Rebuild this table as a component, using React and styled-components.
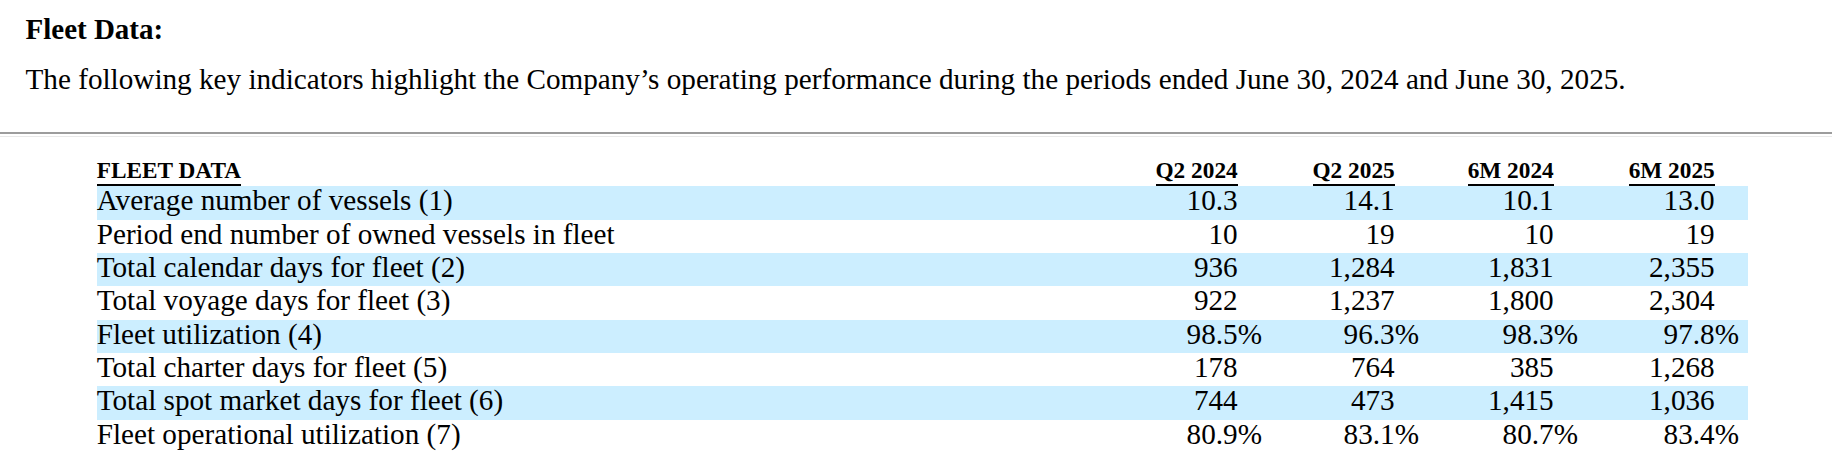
import React from 'react';
import styled, { createGlobalStyle } from 'styled-components';

const GlobalStyle = createGlobalStyle`
  html, body {
    margin: 0;
    padding: 0;
    background: #fff;
  }
  body {
    font-family: "Liberation Serif", "Times New Roman", serif;
    color: #000;
  }
`;

const Page = styled.div`
  padding-top: 11.5px;
`;

const Intro = styled.div`
  padding-left: 25.5px;
`;

const Heading = styled.h2`
  margin: 0;
  font-size: 29px;
  line-height: 34px;
  font-weight: bold;
`;

const Lead = styled.p`
  margin: 16.7px 0 0;
  font-size: 29.2px;
  line-height: 34px;
`;

const Rule = styled.hr`
  margin: 35.5px 0 0;
  height: 2px;
  border: none;
  border-top: 2px solid #9c9c9c;
  border-bottom: 1px solid #e9e9e9;
`;

const Table = styled.table`
  margin: 20.6px 0 0 96.7px;
  width: 1651px;
  table-layout: fixed;
  border-collapse: collapse;
  border-spacing: 0;
`;

const HeadCell = styled.th`
  padding: 0;
  vertical-align: bottom;
  text-align: ${(p) => (p.$left ? 'left' : 'right')};
  font-size: 23.3px;
  font-weight: bold;
  white-space: nowrap;
`;

const HeadLabel = styled.span`
  display: inline-block;
  line-height: 23px;
  padding-bottom: 2px;
  border-bottom: 2px solid #000;
`;

const Row = styled.tr`
  background: ${(p) => (p.$shaded ? '#cceeff' : 'transparent')};
`;

const Cell = styled.td`
  padding: 0;
  height: 33.33px;
  box-sizing: border-box;
  vertical-align: top;
  font-size: 29.2px;
  line-height: 28px;
  white-space: nowrap;
  text-align: ${(p) => (p.$right ? 'right' : 'left')};
`;

const periods = ['Q2 2024', 'Q2 2025', '6M 2024', '6M 2025'];
const valueWidths = [130, 124, 126, 128];

const rows = [
  { label: 'Average number of vessels (1)', values: ['10.3', '14.1', '10.1', '13.0'] },
  { label: 'Period end number of owned vessels in fleet', values: ['10', '19', '10', '19'] },
  { label: 'Total calendar days for fleet (2)', values: ['936', '1,284', '1,831', '2,355'] },
  { label: 'Total voyage days for fleet (3)', values: ['922', '1,237', '1,800', '2,304'] },
  { label: 'Fleet utilization (4)', values: ['98.5', '96.3', '98.3', '97.8'], pct: true },
  { label: 'Total charter days for fleet (5)', values: ['178', '764', '385', '1,268'] },
  { label: 'Total spot market days for fleet (6)', values: ['744', '473', '1,415', '1,036'] },
  { label: 'Fleet operational utilization (7)', values: ['80.9', '83.1', '80.7', '83.4'], pct: true },
];

export default function App() {
  return (
    <Page>
      <GlobalStyle />
      <Intro>
        <Heading>Fleet Data:</Heading>
        <Lead>
          The following key indicators highlight the Company’s operating performance during the
          periods ended June 30, 2024 and June 30, 2025.
        </Lead>
      </Intro>
      <Rule />
      <Table>
        <colgroup>
          <col />
          {valueWidths.map((w, i) => (
            <React.Fragment key={i}>
              <col style={{ width: w }} />
              <col style={{ width: 33 }} />
            </React.Fragment>
          ))}
        </colgroup>
        <thead>
          <tr>
            <HeadCell $left>
              <HeadLabel>FLEET DATA</HeadLabel>
            </HeadCell>
            {periods.map((p) => (
              <React.Fragment key={p}>
                <HeadCell>
                  <HeadLabel>{p}</HeadLabel>
                </HeadCell>
                <HeadCell />
              </React.Fragment>
            ))}
          </tr>
        </thead>
        <tbody>
          {rows.map((r, i) => (
            <Row key={r.label} $shaded={i % 2 === 0}>
              <Cell>{r.label}</Cell>
              {r.values.map((v, j) => (
                <React.Fragment key={j}>
                  <Cell $right>{v}</Cell>
                  <Cell>{r.pct ? '%' : ''}</Cell>
                </React.Fragment>
              ))}
            </Row>
          ))}
        </tbody>
      </Table>
    </Page>
  );
}
